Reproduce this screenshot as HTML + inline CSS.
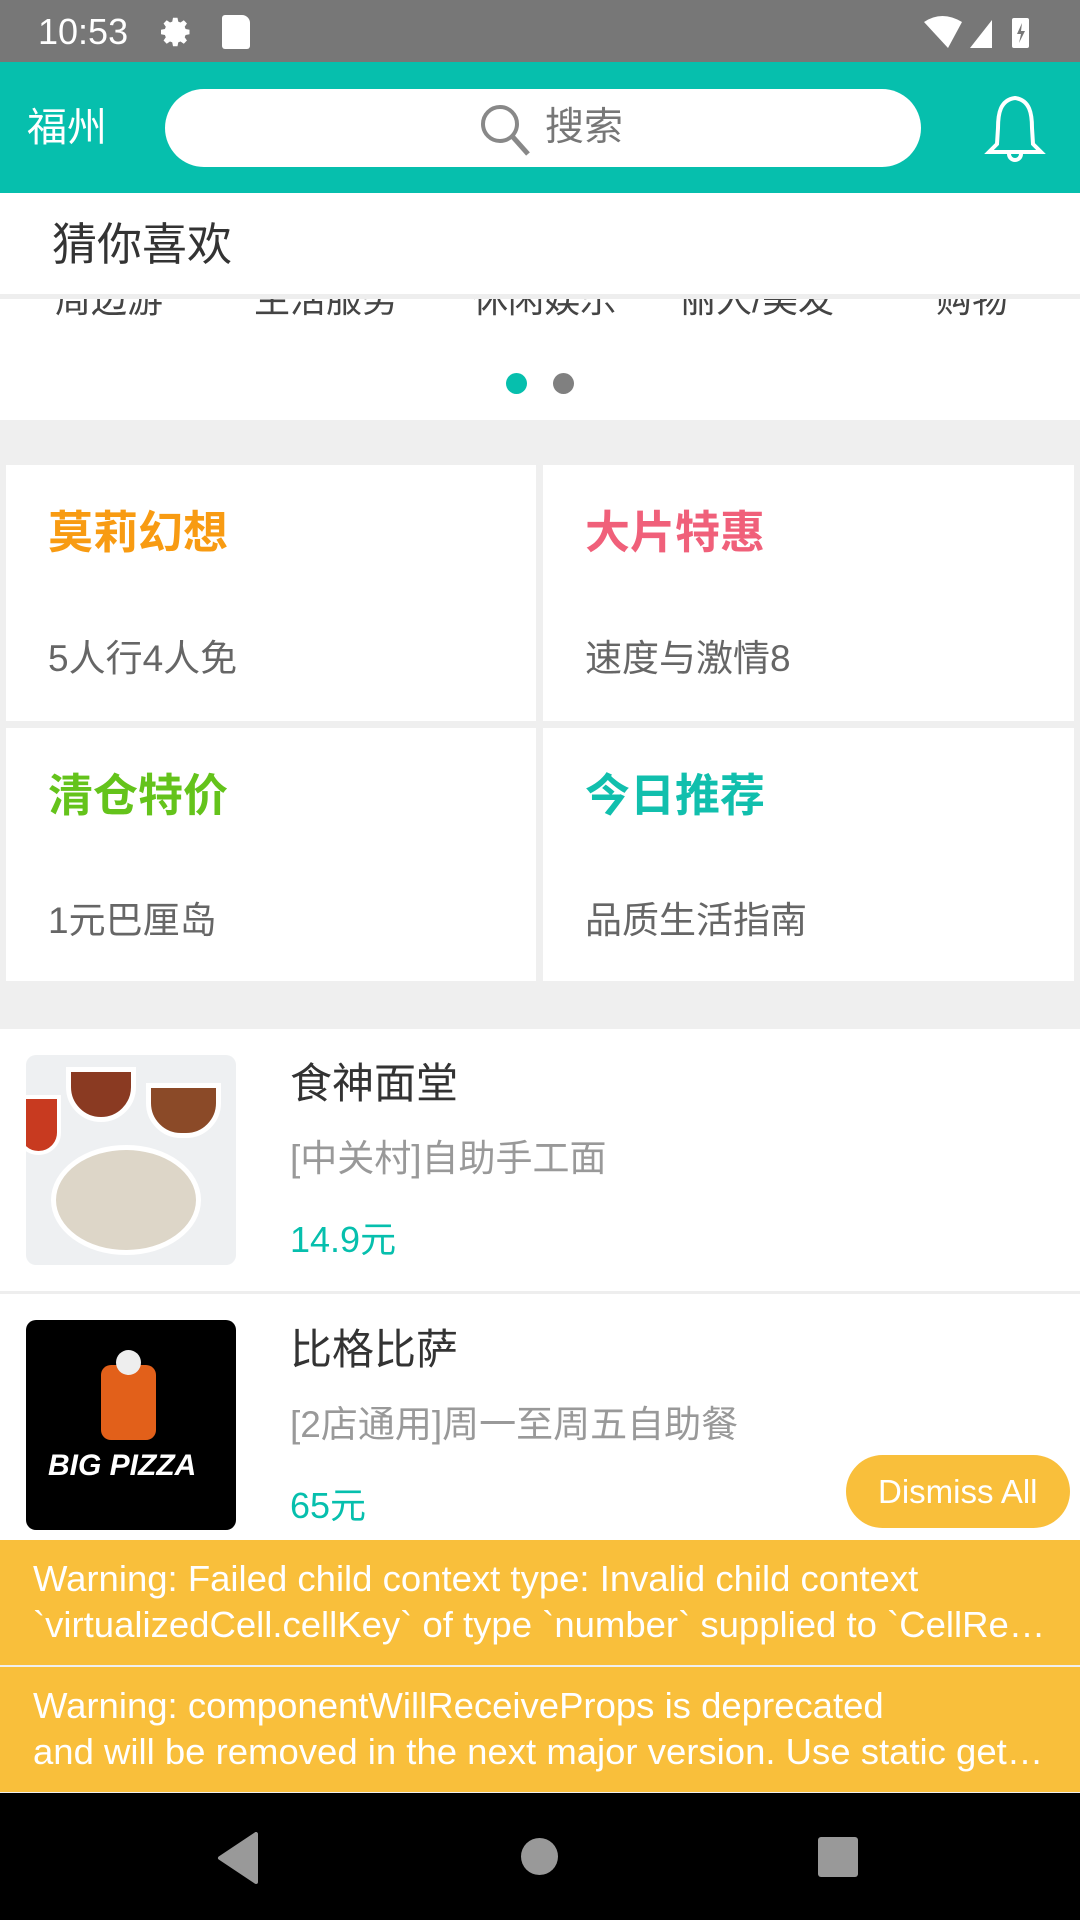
<!DOCTYPE html>
<html><head><meta charset="utf-8"><style>
*{margin:0;padding:0;box-sizing:border-box}
body{width:1080px;height:1920px;position:relative;overflow:hidden;background:#efefef;font-family:"Liberation Sans","Noto Sans CJK SC",sans-serif}
.a{position:absolute}
.t{position:absolute;white-space:nowrap;line-height:1}
</style></head><body>
<div class="a" style="left:0;top:0;width:1080px;height:62px;background:#777"></div>
<div class="t" style="left:38px;top:14px;font-size:36px;color:#fff">10:53</div>
<svg class="a" style="left:158px;top:14px" width="36" height="36" viewBox="0 0 24 24"><path fill="#fff" d="M12 8a4 4 0 100 8 4 4 0 000-8zm9 5.5v-3l-2.6-.5-.6-1.5 1.5-2.2-2.1-2.1-2.2 1.5-1.5-.6L13 2.5h-3l-.5 2.6-1.5.6-2.2-1.5-2.1 2.1 1.5 2.2-.6 1.5-2.6.5v3l2.6.5.6 1.5-1.5 2.2 2.1 2.1 2.2-1.5 1.5.6.5 2.6h3l.5-2.6 1.5-.6 2.2 1.5 2.1-2.1-1.5-2.2.6-1.5z"/></svg>
<div class="a" style="left:222px;top:15px;width:28px;height:34px;background:#fff;border-radius:3px 8px 3px 3px"></div>
<svg class="a" style="left:922px;top:14px" width="110" height="36" viewBox="0 0 110 36"><path fill="#fff" d="M2 8 Q20 -4 40 8 L26 34Z"/><path fill="#fff" d="M48 34 L70 6 L70 34Z"/><rect x="90" y="4" width="17" height="30" rx="2" fill="#fff"/><path d="M100 9 L95 20 L99 20 L97 29 L103 17 L99 17Z" fill="#777"/></svg>

<div class="a" style="left:0;top:62px;width:1080px;height:131px;background:#06bfad"></div>
<div class="t" style="left:27px;top:108px;font-size:40px;color:#fff">福州</div>
<div class="a" style="left:165px;top:89px;width:756px;height:78px;background:#fff;border-radius:39px"></div>
<svg class="a" style="left:478px;top:102px" width="56" height="56" viewBox="0 0 56 56"><circle cx="22" cy="22" r="17" fill="none" stroke="#888" stroke-width="4"/><path d="M34 34 L50 52" stroke="#888" stroke-width="5"/></svg>
<div class="t" style="left:545px;top:108px;font-size:39px;color:#777">搜索</div>
<svg class="a" style="left:980px;top:92px" width="70" height="72" viewBox="0 0 70 72"><path d="M35 6 C20 8 18 22 18 36 L17 52 L9 60 L61 60 L53 52 L52 36 C52 22 50 8 35 6Z" fill="none" stroke="#fff" stroke-width="4"/><path d="M29 62 A6 6 0 0 0 41 62" fill="none" stroke="#fff" stroke-width="4"/></svg>

<div class="a" style="left:0;top:193px;width:1080px;height:101px;background:#fff"></div>
<div class="t" style="left:52px;top:222px;font-size:45px;color:#333">猜你喜欢</div>
<div class="a" style="left:0;top:294px;width:1080px;height:5px;background:#eee"></div>
<div class="a" style="left:0;top:299px;width:1080px;height:121px;background:#fff;overflow:hidden">
 <div class="t" style="left:55px;top:-17px;font-size:36px;color:#444">周边游</div>
 <div class="t" style="left:254px;top:-17px;font-size:36px;color:#444">生活服务</div>
 <div class="t" style="left:472px;top:-17px;font-size:36px;color:#444">休闲娱乐</div>
 <div class="t" style="left:680px;top:-17px;font-size:36px;color:#444">丽人/美发</div>
 <div class="t" style="left:936px;top:-17px;font-size:36px;color:#444">购物</div>
 <div class="a" style="left:506px;top:74px;width:21px;height:21px;border-radius:50%;background:#06bfad"></div>
 <div class="a" style="left:553px;top:74px;width:21px;height:21px;border-radius:50%;background:#808080"></div>
</div>

<div class="a" style="left:6px;top:465px;width:530px;height:256px;background:#fff"></div>
<div class="a" style="left:543px;top:465px;width:531px;height:256px;background:#fff"></div>
<div class="a" style="left:6px;top:728px;width:530px;height:253px;background:#fff"></div>
<div class="a" style="left:543px;top:728px;width:531px;height:253px;background:#fff"></div>
<div class="t" style="left:48px;top:510px;font-size:45px;font-weight:bold;color:#f89b12">莫莉幻想</div>
<div class="t" style="left:48px;top:640px;font-size:37px;color:#666">5人行4人免</div>
<div class="t" style="left:585px;top:510px;font-size:45px;font-weight:bold;color:#f0607a">大片特惠</div>
<div class="t" style="left:585px;top:640px;font-size:37px;color:#666">速度与激情8</div>
<div class="t" style="left:48px;top:773px;font-size:45px;font-weight:bold;color:#64c31b">清仓特价</div>
<div class="t" style="left:48px;top:902px;font-size:37px;color:#666">1元巴厘岛</div>
<div class="t" style="left:585px;top:773px;font-size:45px;font-weight:bold;color:#11bfad">今日推荐</div>
<div class="t" style="left:585px;top:902px;font-size:37px;color:#666">品质生活指南</div>

<div class="a" style="left:0;top:1029px;width:1080px;height:262px;background:#fff"></div>
<div class="a" style="left:0;top:1294px;width:1080px;height:250px;background:#fff"></div>
<div class="a" style="left:26px;top:1055px;width:210px;height:210px;border-radius:10px;background:#eef0f2;overflow:hidden">
 <div class="a" style="left:25px;top:90px;width:150px;height:110px;border-radius:50%;background:#ddd6c8;border:5px solid #fff"></div>
 <div class="a" style="left:40px;top:12px;width:70px;height:55px;border-radius:0 0 35px 35px;background:#8a3a22;border:5px solid #fff"></div>
 <div class="a" style="left:120px;top:28px;width:75px;height:55px;border-radius:0 0 35px 35px;background:#8b4a28;border:5px solid #fff"></div>
 <div class="a" style="left:-10px;top:40px;width:45px;height:60px;border-radius:0 0 25px 25px;background:#c83a20;border:4px solid #fff"></div>
</div>
<div class="t" style="left:290px;top:1063px;font-size:42px;color:#333">食神面堂</div>
<div class="t" style="left:290px;top:1140px;font-size:37px;color:#999">[中关村]自助手工面</div>
<div class="t" style="left:290px;top:1222px;font-size:36px;color:#06bfad">14.9元</div>
<div class="a" style="left:0;top:1291px;width:1080px;height:3px;background:#eee"></div>
<div class="a" style="left:26px;top:1320px;width:210px;height:210px;border-radius:10px;background:#000;overflow:hidden">
 <div class="a" style="left:75px;top:45px;width:55px;height:75px;border-radius:10px;background:#e2601a"></div>
 <div class="a" style="left:90px;top:30px;width:25px;height:25px;border-radius:50%;background:#eee"></div>
 <div class="t" style="left:22px;top:131px;font-size:30px;font-weight:bold;font-style:italic;color:#fff">BIG PIZZA</div>
</div>
<div class="t" style="left:290px;top:1329px;font-size:42px;color:#333">比格比萨</div>
<div class="t" style="left:290px;top:1406px;font-size:37px;color:#999">[2店通用]周一至周五自助餐</div>
<div class="t" style="left:290px;top:1488px;font-size:36px;color:#06bfad">65元</div>
<div class="a" style="left:846px;top:1455px;width:224px;height:73px;border-radius:37px;background:#f9bf3b"></div>
<div class="t" style="left:878px;top:1475px;font-size:33px;color:#fff">Dismiss All</div>

<div class="a" style="left:0;top:1540px;width:1080px;height:125px;background:#f9bf3b"></div>
<div class="a" style="left:0;top:1667px;width:1080px;height:125px;background:#f9bf3b"></div>
<div class="t" style="left:33px;top:1556px;font-size:36.5px;color:#fff;line-height:46px">Warning: Failed child context type: Invalid child context<br>`virtualizedCell.cellKey` of type `number` supplied to `CellRe…</div>
<div class="t" style="left:33px;top:1683px;font-size:36.5px;color:#fff;line-height:46px">Warning: componentWillReceiveProps is deprecated<br>and will be removed in the next major version. Use static get…</div>

<div class="a" style="left:0;top:1793px;width:1080px;height:127px;background:#000"></div>
<svg class="a" style="left:216px;top:1832px" width="44" height="52" viewBox="0 0 44 52"><path d="M40 2 L40 50 L4 26Z" fill="#999" stroke="#999" stroke-width="4" stroke-linejoin="round"/></svg>
<div class="a" style="left:521px;top:1838px;width:37px;height:37px;border-radius:50%;background:#999"></div>
<div class="a" style="left:818px;top:1837px;width:40px;height:40px;border-radius:3px;background:#999"></div>
</body></html>
